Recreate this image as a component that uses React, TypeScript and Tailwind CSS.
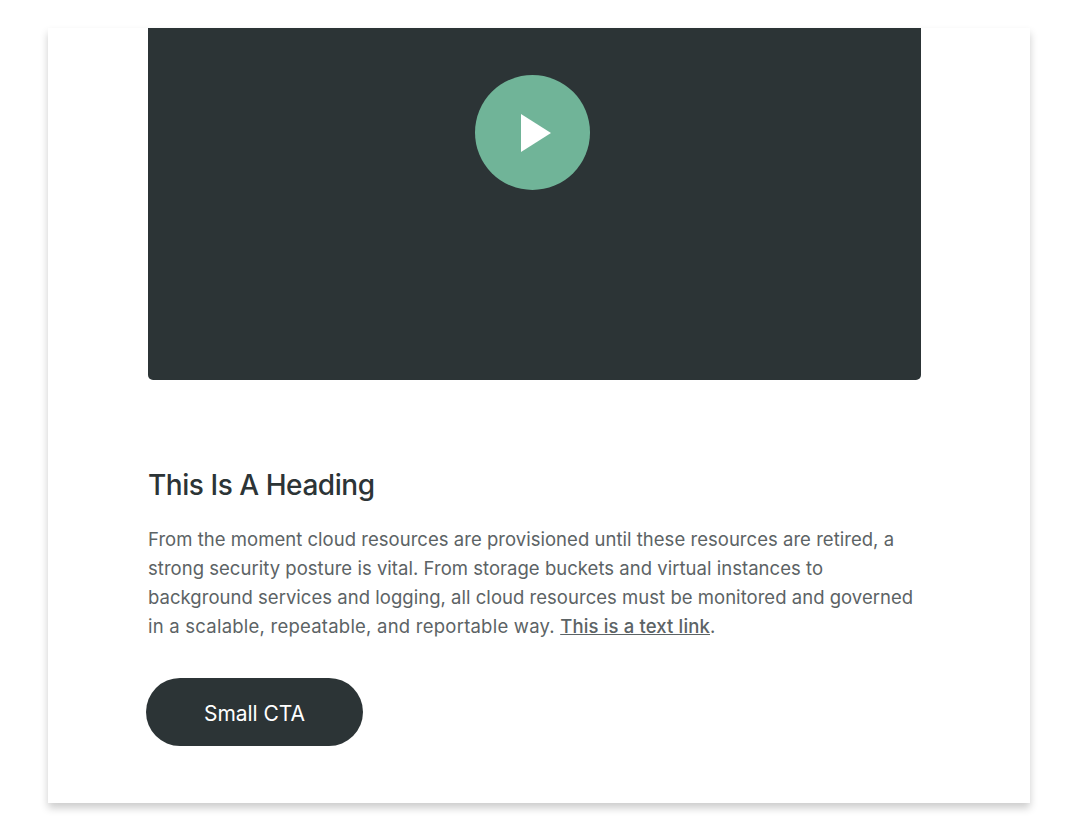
export default function App() {
  return (
    <div className="min-h-[830px] bg-white pt-[28px] pl-[48px] font-['Inter','Liberation_Sans',sans-serif] overflow-hidden">
      {/* Card */}
      <div className="w-[982px] h-[775px] bg-white pl-[100px] shadow-[0_5px_8px_rgba(0,0,0,0.2)]">
        {/* Video */}
        <div className="w-[773px] h-[352px] bg-[#2c3436] rounded-b-[5px] flex justify-center pt-[47px] pr-[4px]">
          <button className="w-[115px] h-[115px] rounded-full bg-[#70b498] flex items-center justify-center">
            <svg width="30" height="38" viewBox="0 0 30 38" className="ml-[6px]">
              <path d="M0 0 L30 19 L0 38 Z" fill="#ffffff" />
            </svg>
          </button>
        </div>

        <h2 className="mt-[86px] text-[28px] leading-[38px] font-medium text-[#2c3436] tracking-[-0.45px]">This Is A Heading</h2>

        <p className="mt-[21px] w-[780px] text-[18.5px] leading-[29px] text-[#5c6365] tracking-[0.03px]">
          From the moment cloud resources are provisioned until these resources are retired, a<br />
          strong security posture is vital. From storage buckets and virtual instances to<br />
          background services and logging, all cloud resources must be monitored and governed<br />
          <span className="tracking-[0.23px]">in a scalable, repeatable, and reportable way.</span>{' '}
          <a href="#" className="font-medium underline tracking-[0.15px]">This is a text link</a>.
        </p>

        <button className="mt-[37px] -ml-[2px] w-[217px] h-[68px] pt-[3px] rounded-full bg-[#2c3436] text-white text-[21px] tracking-[-0.05px]">
          Small CTA
        </button>
      </div>
    </div>
  );
}
